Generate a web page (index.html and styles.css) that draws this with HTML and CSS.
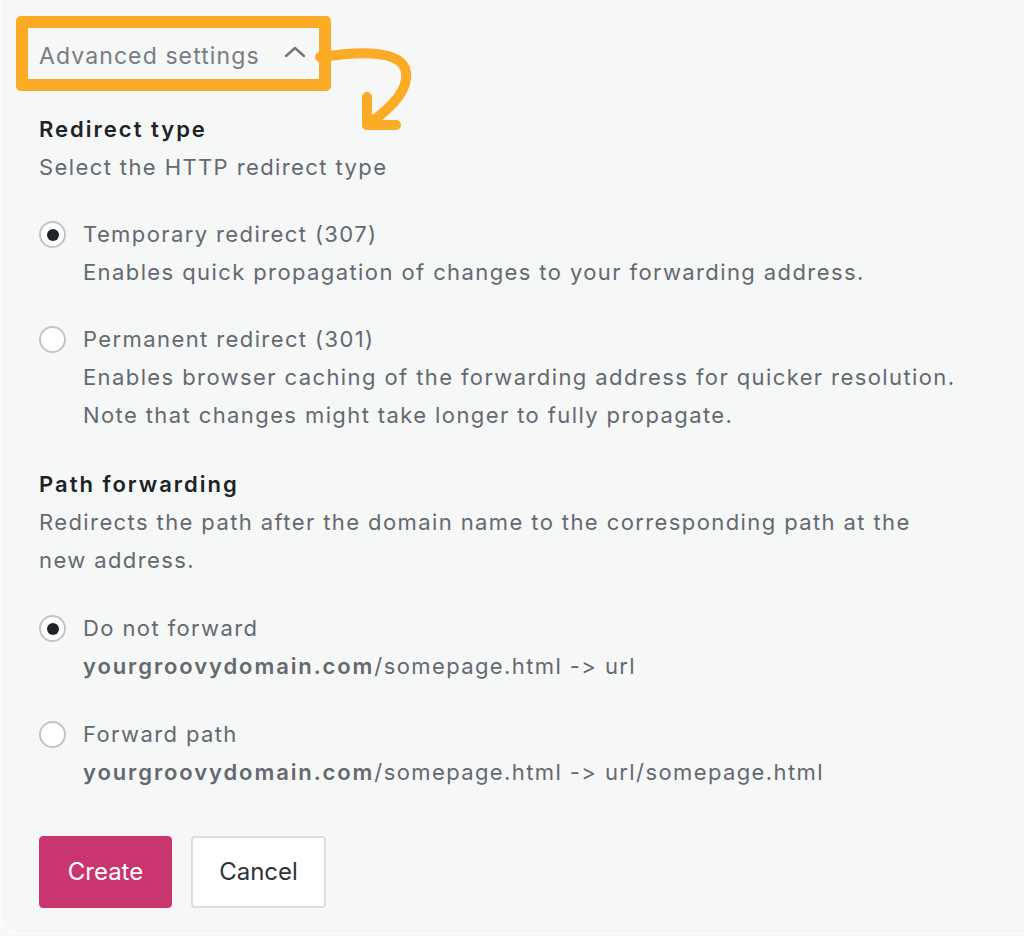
FILE: index.html
```html
<!DOCTYPE html>
<html lang="en">
<head>
  <meta charset="UTF-8" />
  <title>Advanced settings</title>
  <link rel="stylesheet" href="styles.css">
</head>
<body>
  <div class="panel">
    <div class="toggle-wrap">
      <button class="advanced-toggle">
        <span>Advanced settings</span>
        <svg class="chevron" width="22" height="14" viewBox="0 0 22 14">
          <path d="M2 11 L11 3 L20 11" fill="none" stroke="#757575" stroke-width="2.4" stroke-linecap="round" stroke-linejoin="round"/>
        </svg>
      </button>
      <!-- annotation arrow -->
      <svg class="arrow" width="120" height="120" viewBox="0 0 120 120">
        <path d="M6 27 C40 22, 88 18, 92 42 C95 62, 72 82, 53 95" fill="none" stroke="#fbab25" stroke-width="10" stroke-linecap="round"/>
        <path d="M53 67 L53 95 L82 95" fill="none" stroke="#fbab25" stroke-width="10" stroke-linecap="round" stroke-linejoin="round"/>
      </svg>
    </div>

    <section class="group">
      <h2>Redirect type</h2>
      <p class="help">Select the HTTP redirect type</p>

      <label class="option">
        <span class="radio checked"></span>
        <span class="option-text">
          <span class="option-label">Temporary redirect (307)</span>
          <span class="option-desc">Enables quick propagation of changes to your forwarding address.</span>
        </span>
      </label>

      <label class="option">
        <span class="radio"></span>
        <span class="option-text">
          <span class="option-label">Permanent redirect (301)</span>
          <span class="option-desc">Enables browser caching of the forwarding address for quicker resolution. Note that changes might take longer to fully propagate.</span>
        </span>
      </label>
    </section>

    <section class="group path">
      <h2>Path forwarding</h2>
      <p class="help">Redirects the path after the domain name to the corresponding path at the new address.</p>

      <label class="option">
        <span class="radio checked"></span>
        <span class="option-text">
          <span class="option-label">Do not forward</span>
          <span class="option-desc"><b>yourgroovydomain.com</b>/somepage.html -&gt; url</span>
        </span>
      </label>

      <label class="option">
        <span class="radio"></span>
        <span class="option-text">
          <span class="option-label">Forward path</span>
          <span class="option-desc"><b>yourgroovydomain.com</b>/somepage.html -&gt; url/somepage.html</span>
        </span>
      </label>
    </section>

    <div class="actions">
      <button class="btn btn-primary">Create</button>
      <button class="btn btn-secondary">Cancel</button>
    </div>
  </div>
</body>
</html>
```

FILE: styles.css
```css
:root {
  --bg: #f6f7f7;
  --orange: #fbab25;
  --text: #1d2327;
  --muted: #646970;
  --pink: #c9356e;
  --border: #c3c4c7;
}

* {
  box-sizing: border-box;
}

body, html {
  margin: 0;
  height: 100%;
  background: var(--bg);
  font-family: Inter, 'Noto Sans', sans-serif;
  font-size: 22px;
  line-height: 38px;
  letter-spacing: 1.4px;
  font-variant-ligatures: none;
  font-feature-settings: "calt" 0;
  color: var(--muted);
}

.panel {
  min-height: 934px;
  padding: 16px 0 0 37px;
  border-left: 2px solid #fbfbfb;
  border-bottom: 2px solid #fbfbfb;
  border-bottom-left-radius: 12px;
}

.toggle-wrap {
  position: relative;
  margin-left: -23px;
  width: 315px;
}

.advanced-toggle {
  display: flex;
  align-items: center;
  justify-content: space-between;
  width: 315px;
  height: 75px;
  padding: 5px 13px 0 11px;
  border: 12px solid var(--orange);
  border-radius: 5px;
  background: transparent;
  font: inherit;
  font-size: 23px;
  letter-spacing: 1.1px;
  color: #787c82;
  cursor: pointer;
}

.chevron {
  margin-top: -8px;
}

.arrow {
  position: absolute;
  left: 298px;
  top: 14px;
}

.group {
  margin-top: 19px;
}

.group.path {
  margin-top: 31px;
}

h2 {
  margin: 0;
  font-size: 22px;
  font-weight: 600;
  letter-spacing: 2px;
  color: var(--text);
}

.help {
  margin: 0;
  max-width: 890px;
}

.option {
  display: flex;
  gap: 17px;
  margin-top: 29px;
}

.group.path .option {
  margin-top: 30px;
}

.option-text {
  display: flex;
  flex-direction: column;
  max-width: 890px;
}

.radio {
  flex: none;
  width: 27px;
  height: 27px;
  margin-top: 6px;
  border: 2px solid var(--border);
  border-radius: 50%;
  background: #fff;
  display: flex;
  align-items: center;
  justify-content: center;
}

.radio.checked::after {
  content: "";
  width: 12px;
  height: 12px;
  border-radius: 50%;
  background: var(--text);
}

.option-desc b {
  font-weight: 600;
  letter-spacing: 1.9px;
}

.actions {
  display: flex;
  gap: 19px;
  margin-top: 45px;
}

.btn {
  height: 72px;
  padding: 0;
  border-radius: 4px;
  font: inherit;
  font-size: 24px;
  cursor: pointer;
}

.btn-primary {
  width: 133px;
  background: var(--pink);
  border: 1px solid var(--pink);
  color: #fff;
}

.btn-secondary {
  width: 135px;
  background: #fff;
  border: 2px solid #dcdcde;
  color: #2c3338;
}
```
